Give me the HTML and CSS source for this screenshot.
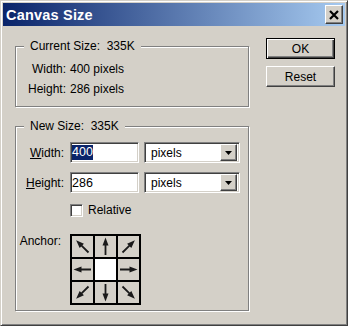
FILE: index.html
```html
<!DOCTYPE html>
<html lang="en">
<head>
    <meta charset="UTF-8">
    <title>Canvas Size</title>
    <link rel="stylesheet" href="styles.css">
</head>
<body>
    <!-- dialog window -->
    <div class="window">
        <div class="titlebar">
            <span class="title">Canvas Size</span>
            <span class="close-btn">
                <svg width="10" height="10" viewBox="0 0 10 10"><path d="M1 1L9 9M9 1L1 9" stroke="#000" stroke-width="2.2"/></svg>
            </span>
        </div>
        <div class="content">
            <div class="left">
                <!-- current size -->
                <div class="group group-current">
                    <div class="group-title">Current Size:&nbsp; 335K</div>
                    <div class="info-row"><span class="label">Width:</span><span>400 pixels</span></div>
                    <div class="info-row"><span class="label">Height:</span><span>286 pixels</span></div>
                </div>
                <!-- new size -->
                <div class="group group-new">
                    <div class="group-title">New Size:&nbsp; 335K</div>
                    <div class="field-row">
                        <span class="label"><u>W</u>idth:</span>
                        <div class="textbox"><span class="sel">400</span></div>
                        <div class="select"><span class="select-text">pixels</span><span class="drop-btn"><svg width="7" height="4" viewBox="0 0 7 4"><path d="M0 0H7L3.5 4Z"/></svg></span></div>
                    </div>
                    <div class="field-row row2">
                        <span class="label"><u>H</u>eight:</span>
                        <div class="textbox">286</div>
                        <div class="select"><span class="select-text">pixels</span><span class="drop-btn"><svg width="7" height="4" viewBox="0 0 7 4"><path d="M0 0H7L3.5 4Z"/></svg></span></div>
                    </div>
                    <div class="check-row">
                        <span class="checkbox"></span><span>Relative</span>
                    </div>
                    <div class="anchor-row">
                        <span class="label">Anchor:</span>
                        <div class="anchor-grid">
                            <div class="cell"><svg viewBox="0 0 21 21"><path d="M10.5 1.5L13.5 9.5H11.4V19H9.6V9.5H7.5Z" transform="rotate(-45 10.5 10.5)"/></svg></div>
                            <div class="cell"><svg viewBox="0 0 21 21"><path d="M10.5 1.5L13.5 9.5H11.4V19H9.6V9.5H7.5Z"/></svg></div>
                            <div class="cell"><svg viewBox="0 0 21 21"><path d="M10.5 1.5L13.5 9.5H11.4V19H9.6V9.5H7.5Z" transform="rotate(45 10.5 10.5)"/></svg></div>
                            <div class="cell"><svg viewBox="0 0 21 21"><path d="M10.5 1.5L13.5 9.5H11.4V19H9.6V9.5H7.5Z" transform="rotate(-90 10.5 10.5)"/></svg></div>
                            <div class="cell cell-center"></div>
                            <div class="cell"><svg viewBox="0 0 21 21"><path d="M10.5 1.5L13.5 9.5H11.4V19H9.6V9.5H7.5Z" transform="rotate(90 10.5 10.5)"/></svg></div>
                            <div class="cell"><svg viewBox="0 0 21 21"><path d="M10.5 1.5L13.5 9.5H11.4V19H9.6V9.5H7.5Z" transform="rotate(-135 10.5 10.5)"/></svg></div>
                            <div class="cell"><svg viewBox="0 0 21 21"><path d="M10.5 1.5L13.5 9.5H11.4V19H9.6V9.5H7.5Z" transform="rotate(180 10.5 10.5)"/></svg></div>
                            <div class="cell"><svg viewBox="0 0 21 21"><path d="M10.5 1.5L13.5 9.5H11.4V19H9.6V9.5H7.5Z" transform="rotate(135 10.5 10.5)"/></svg></div>
                        </div>
                    </div>
                </div>
            </div>
            <!-- buttons -->
            <div class="buttons">
                <div class="btn btn-default">OK</div>
                <div class="btn">Reset</div>
            </div>
        </div>
    </div>
</body>
</html>
```
FILE: styles.css
```css
*{
    margin: 0;
    padding: 0;
    box-sizing: border-box;
}
body{
    font-family: "Liberation Sans", Arial, sans-serif;
    font-size: 12px;
    color: #000;
    background-color: #d4d0c8;
}
.window{
    width: 348px;
    height: 326px;
    padding: 2px;
    border: 1px solid;
    border-color: #d4d0c8 #404040 #404040 #d4d0c8;
    box-shadow: inset 1px 1px 0 #fff, inset -1px -1px 0 #808080;
    background-color: #d4d0c8;
}
.titlebar{
    height: 23px;
    display: flex;
    align-items: center;
    justify-content: space-between;
    padding: 0 2px 0 3px;
    background: linear-gradient(to right, #0a246a, #a6caf0);
}
.title{
    color: #fff;
    font-size: 14.5px;
    font-weight: bold;
    letter-spacing: 0.2px;
}
.close-btn{
    width: 18px;
    height: 19px;
    display: flex;
    align-items: center;
    justify-content: center;
    background-color: #d4d0c8;
    border: 1px solid;
    border-color: #fff #404040 #404040 #fff;
    box-shadow: inset -1px -1px 0 #808080;
}
.content{
    display: flex;
    padding-top: 12px;
}
.left{
    padding-left: 12px;
}
.group{
    width: 234px;
    border: 1px solid #808080;
    box-shadow: 1px 1px 0 #fff, inset 1px 1px 0 #fff;
}
.group-current{
    margin-top: 8px;
    padding-bottom: 7px;
}
.group-new{
    margin-top: 19px;
    padding-bottom: 5px;
}
.group-title{
    width: fit-content;
    height: 14px;
    line-height: 14px;
    margin: -8px 0 0 8px;
    padding: 0 6px;
    background-color: #d4d0c8;
}
.info-row{
    display: flex;
    height: 20px;
    align-items: center;
}
.group-title + .info-row{
    margin-top: 6px;
}
.label{
    width: 54px;
    text-align: right;
    padding-right: 4px;
}
.field-row{
    display: flex;
    align-items: center;
    height: 21px;
    margin-top: 9px;
}
.field-row .label{
    padding-right: 6px;
}
.textbox,
.select,
.checkbox{
    height: 21px;
    border: 1px solid;
    border-color: #808080 #fff #fff #808080;
    box-shadow: inset 1px 1px 0 #404040, inset -1px -1px 0 #d4d0c8;
    background-color: #fff;
}
.textbox{
    width: 69px;
    padding: 0 1px;
    display: flex;
    align-items: center;
    font-size: 12.5px;
}
.sel{
    background-color: #0a246a;
    color: #fff;
    line-height: 15px;
}
.select{
    width: 96px;
    margin-left: 5px;
    display: flex;
    align-items: center;
    justify-content: space-between;
    padding: 2px;
}
.select-text{
    padding-left: 4px;
}
.drop-btn{
    width: 17px;
    height: 17px;
    display: flex;
    align-items: center;
    justify-content: center;
    background-color: #d4d0c8;
    border: 1px solid;
    border-color: #fff #404040 #404040 #fff;
    box-shadow: inset -1px -1px 0 #808080;
}
.check-row{
    display: flex;
    align-items: center;
    gap: 5px;
    margin: 10px 0 0 54px;
}
.checkbox{
    width: 13px;
    height: 13px;
}
.anchor-row{
    display: flex;
    margin-top: 17px;
}
.anchor-row .label{
    padding-right: 9px;
    line-height: 14px;
}
.anchor-grid{
    display: grid;
    grid-template-columns: repeat(3, 21px);
    grid-template-rows: repeat(3, 21px);
    gap: 2px;
    padding: 2px;
    background-color: #000;
}
.cell{
    background-color: #d4d0c8;
}
.cell svg{
    display: block;
    width: 21px;
    height: 21px;
    fill: #1a1a1a;
}
.cell-center{
    background-color: #fff;
}
.buttons{
    margin-left: 17px;
    display: flex;
    flex-direction: column;
    gap: 7px;
}
.btn{
    width: 69px;
    height: 21px;
    display: flex;
    align-items: center;
    justify-content: center;
    border: 1px solid;
    border-color: #fff #404040 #404040 #fff;
    box-shadow: inset -1px -1px 0 #808080;
}
.btn-default{
    border-color: #000;
    box-shadow: inset 1px 1px 0 #fff, inset -1px -1px 0 #404040, inset -2px -2px 0 #808080;
}
```
